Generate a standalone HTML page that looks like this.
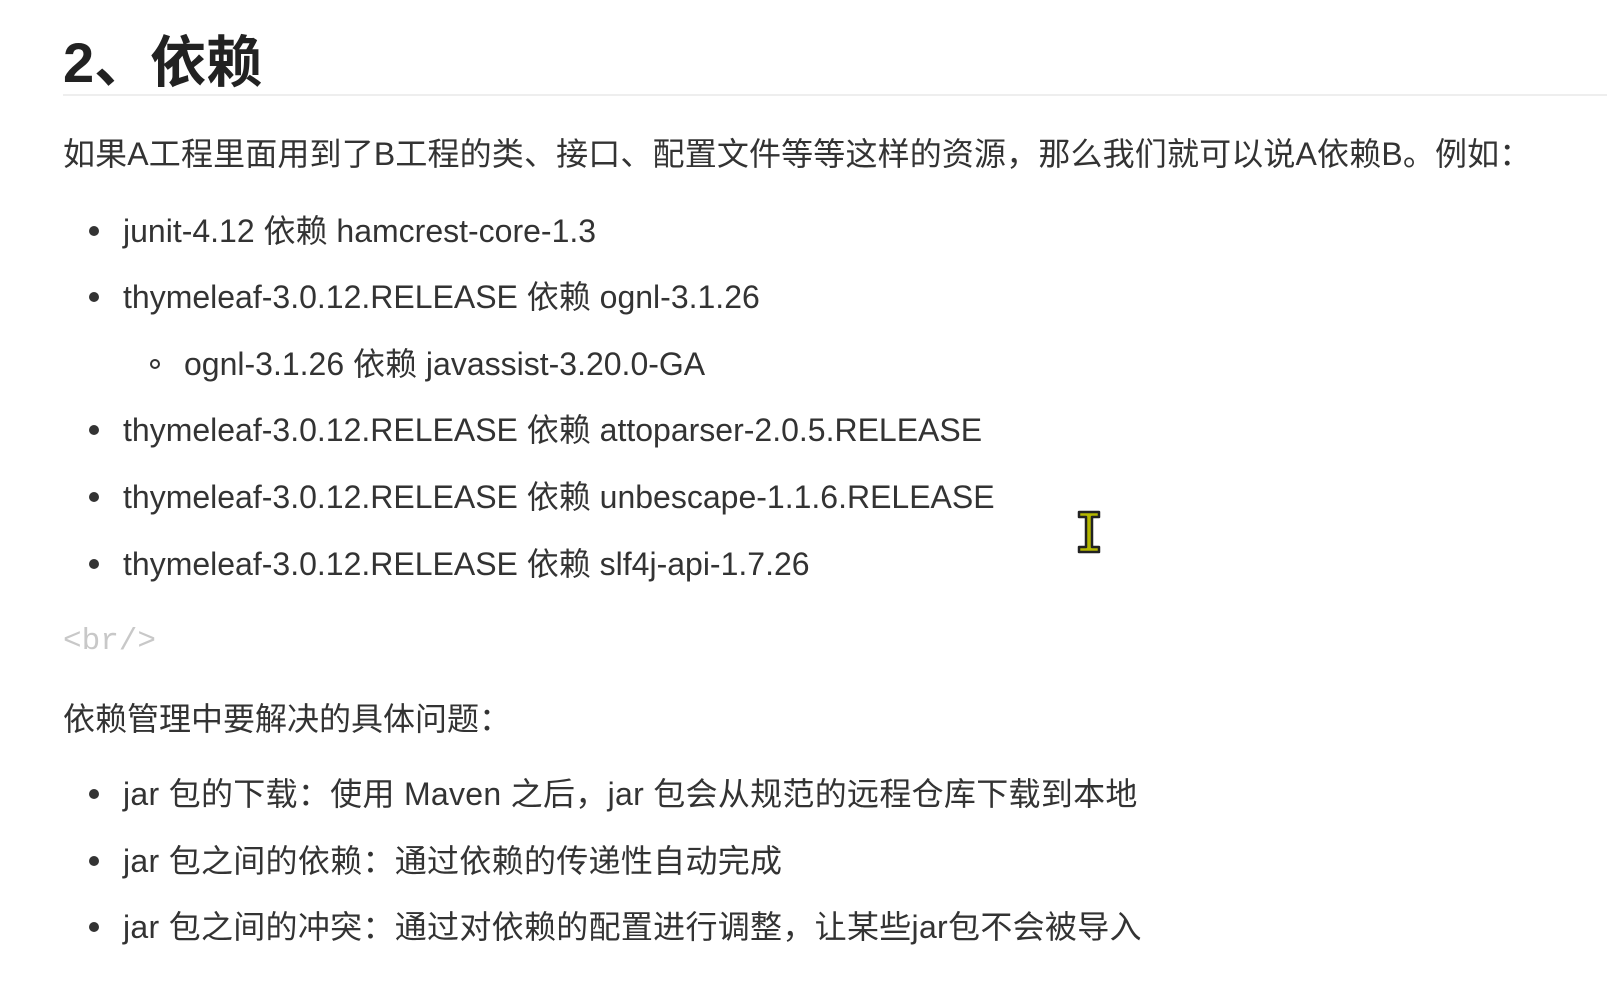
<!DOCTYPE html>
<html><head><meta charset="utf-8"><style>
html,body{margin:0;padding:0;background:#fff;width:1607px;height:1005px;overflow:hidden}
body{font-family:"Liberation Sans","Noto Sans CJK SC",sans-serif;color:#333;position:relative}
.l{position:absolute;white-space:nowrap;font-size:32px;line-height:40px}
h1{position:absolute;left:63px;top:28px;margin:0;font-size:56px;line-height:70px;font-weight:bold;color:#222;font-family:"Liberation Sans","Noto Sans CJK SC",sans-serif}
.hr{position:absolute;left:63px;top:94px;width:1544px;height:2px;background:#eee}
.b{position:absolute;width:10px;height:10px;border-radius:50%;background:#333}
.c{position:absolute;width:10px;height:10px;border-radius:50%;border:2px solid #333;box-sizing:border-box}
</style></head><body>
<h1>2、依赖</h1>
<div class="hr"></div>
<div class="l" style="left:63px;top:134px;letter-spacing:0.15px">如果A工程里面用到了B工程的类、接口、配置文件等等这样的资源，那么我们就可以说A依赖B。例如：</div>

<div class="b" style="left:89px;top:226px"></div><div class="l" style="left:123px;top:211px">junit-4.12 依赖 hamcrest-core-1.3</div>
<div class="b" style="left:89px;top:292px"></div><div class="l" style="left:123px;top:277px">thymeleaf-3.0.12.RELEASE 依赖 ognl-3.1.26</div>
<div class="c" style="left:150px;top:359px"></div><div class="l" style="left:184px;top:344px">ognl-3.1.26 依赖 javassist-3.20.0-GA</div>
<div class="b" style="left:89px;top:425px"></div><div class="l" style="left:123px;top:410px">thymeleaf-3.0.12.RELEASE 依赖 attoparser-2.0.5.RELEASE</div>
<div class="b" style="left:89px;top:492px"></div><div class="l" style="left:123px;top:477px">thymeleaf-3.0.12.RELEASE 依赖 unbescape-1.1.6.RELEASE</div>
<div class="b" style="left:89px;top:559px"></div><div class="l" style="left:123px;top:544px">thymeleaf-3.0.12.RELEASE 依赖 slf4j-api-1.7.26</div>

<div class="l" style="left:63px;top:622px;color:#c8c8c8;font-family:'Liberation Mono',monospace;font-size:31px">&lt;br/&gt;</div>
<div class="l" style="left:63px;top:699px">依赖管理中要解决的具体问题：</div>

<div class="b" style="left:89px;top:789px"></div><div class="l" style="left:123px;top:774px;letter-spacing:0.3px">jar 包的下载：使用 Maven 之后，jar 包会从规范的远程仓库下载到本地</div>
<div class="b" style="left:89px;top:856px"></div><div class="l" style="left:123px;top:841px;letter-spacing:0.3px">jar 包之间的依赖：通过依赖的传递性自动完成</div>
<div class="b" style="left:89px;top:922px"></div><div class="l" style="left:123px;top:907px;letter-spacing:0.3px">jar 包之间的冲突：通过对依赖的配置进行调整，让某些jar包不会被导入</div>

<svg style="position:absolute;left:1077px;top:509px" width="24" height="46" viewBox="0 0 24 46">
<path d="M2 3h20v5h-7v30h7v5H2v-5h7V8H2z" fill="#b5b800" stroke="#222" stroke-width="2.5" stroke-linejoin="round"/>
</svg>
</body></html>
